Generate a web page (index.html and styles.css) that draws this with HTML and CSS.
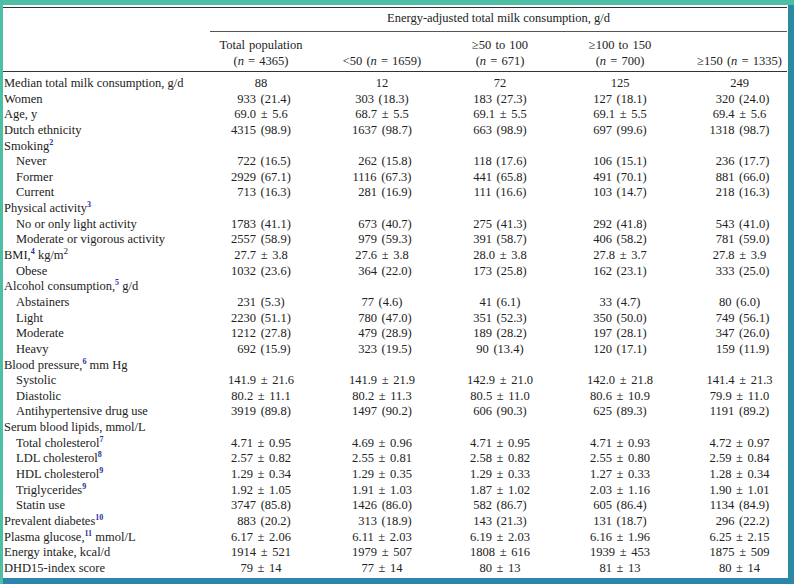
FILE: index.html
```html
<!DOCTYPE html>
<html>
<head>
<meta charset="utf-8">
<link rel="stylesheet" href="styles.css">
</head>
<body>
<div class="frame">
<table class="tbl">
<colgroup>
<col class="c-label"><col class="c1"><col class="c2"><col class="c3"><col class="c4"><col class="c5">
</colgroup>
<thead>
<tr class="span-row"><th></th><th colspan="5" class="spanner">Energy-adjusted total milk consumption, g/d</th></tr>
<tr class="head-row">
<th></th>
<th>Total population<br>(<i>n</i> = 4365)</th>
<th>&lt;50 (<i>n</i> = 1659)</th>
<th>≥50 to 100<br>(<i>n</i> = 671)</th>
<th>≥100 to 150<br>(<i>n</i> = 700)</th>
<th>≥150 (<i>n</i> = 1335)</th>
</tr>
</thead>
<tbody>
<tr class="first"><td>Median total milk consumption, g/d</td><td>88</td><td>12</td><td>72</td><td>125</td><td>249</td></tr>
<tr><td>Women</td><td class="pd">933 (21.4)</td><td>303 (18.3)</td><td>183 (27.3)</td><td>127 (18.1)</td><td class="pd">320 (24.0)</td></tr>
<tr><td>Age, y</td><td>69.0 ± 5.6</td><td>68.7 ± 5.5</td><td>69.1 ± 5.5</td><td>69.1 ± 5.5</td><td>69.4 ± 5.6</td></tr>
<tr><td>Dutch ethnicity</td><td>4315 (98.9)</td><td>1637 (98.7)</td><td>663 (98.9)</td><td>697 (99.6)</td><td>1318 (98.7)</td></tr>
<tr><td>Smoking<sup class="fn">2</sup></td><td></td><td></td><td></td><td></td><td></td></tr>
<tr><td class="ind">Never</td><td class="pd">722 (16.5)</td><td class="pd">262 (15.8)</td><td>118 (17.6)</td><td>106 (15.1)</td><td class="pd">236 (17.7)</td></tr>
<tr><td class="ind">Former</td><td>2929 (67.1)</td><td>1116 (67.3)</td><td>441 (65.8)</td><td>491 (70.1)</td><td class="pd">881 (66.0)</td></tr>
<tr><td class="ind">Current</td><td class="pd">713 (16.3)</td><td class="pd">281 (16.9)</td><td>111 (16.6)</td><td>103 (14.7)</td><td class="pd">218 (16.3)</td></tr>
<tr><td>Physical activity<sup class="fn">3</sup></td><td></td><td></td><td></td><td></td><td></td></tr>
<tr><td class="ind">No or only light activity</td><td>1783 (41.1)</td><td class="pd">673 (40.7)</td><td>275 (41.3)</td><td>292 (41.8)</td><td class="pd">543 (41.0)</td></tr>
<tr><td class="ind">Moderate or vigorous activity</td><td>2557 (58.9)</td><td class="pd">979 (59.3)</td><td>391 (58.7)</td><td>406 (58.2)</td><td class="pd">781 (59.0)</td></tr>
<tr><td>BMI,<sup class="fn">4</sup> kg/m<sup class="pw">2</sup></td><td>27.7 ± 3.8</td><td>27.6 ± 3.8</td><td>28.0 ± 3.8</td><td>27.8 ± 3.7</td><td>27.8 ± 3.9</td></tr>
<tr><td class="ind">Obese</td><td>1032 (23.6)</td><td class="pd">364 (22.0)</td><td>173 (25.8)</td><td>162 (23.1)</td><td class="pd">333 (25.0)</td></tr>
<tr><td>Alcohol consumption,<sup class="fn">5</sup> g/d</td><td></td><td></td><td></td><td></td><td></td></tr>
<tr><td class="ind">Abstainers</td><td>231 (5.3)</td><td>77 (4.6)</td><td>41 (6.1)</td><td>33 (4.7)</td><td>80 (6.0)</td></tr>
<tr><td class="ind">Light</td><td>2230 (51.1)</td><td class="pd">780 (47.0)</td><td>351 (52.3)</td><td>350 (50.0)</td><td class="pd">749 (56.1)</td></tr>
<tr><td class="ind">Moderate</td><td>1212 (27.8)</td><td class="pd">479 (28.9)</td><td>189 (28.2)</td><td>197 (28.1)</td><td class="pd">347 (26.0)</td></tr>
<tr><td class="ind">Heavy</td><td class="pd">692 (15.9)</td><td class="pd">323 (19.5)</td><td>90 (13.4)</td><td>120 (17.1)</td><td class="pd">159 (11.9)</td></tr>
<tr><td>Blood pressure,<sup class="fn">6</sup> mm Hg</td><td></td><td></td><td></td><td></td><td></td></tr>
<tr><td class="ind">Systolic</td><td>141.9 ± 21.6</td><td>141.9 ± 21.9</td><td>142.9 ± 21.0</td><td>142.0 ± 21.8</td><td>141.4 ± 21.3</td></tr>
<tr><td class="ind">Diastolic</td><td>80.2 ± 11.1</td><td>80.2 ± 11.3</td><td>80.5 ± 11.0</td><td>80.6 ± 10.9</td><td>79.9 ± 11.0</td></tr>
<tr><td class="ind">Antihypertensive drug use</td><td>3919 (89.8)</td><td>1497 (90.2)</td><td>606 (90.3)</td><td>625 (89.3)</td><td>1191 (89.2)</td></tr>
<tr><td>Serum blood lipids, mmol/L</td><td></td><td></td><td></td><td></td><td></td></tr>
<tr><td class="ind">Total cholesterol<sup class="fn">7</sup></td><td>4.71 ± 0.95</td><td>4.69 ± 0.96</td><td>4.71 ± 0.95</td><td>4.71 ± 0.93</td><td>4.72 ± 0.97</td></tr>
<tr><td class="ind">LDL cholesterol<sup class="fn">8</sup></td><td>2.57 ± 0.82</td><td>2.55 ± 0.81</td><td>2.58 ± 0.82</td><td>2.55 ± 0.80</td><td>2.59 ± 0.84</td></tr>
<tr><td class="ind">HDL cholesterol<sup class="fn">9</sup></td><td>1.29 ± 0.34</td><td>1.29 ± 0.35</td><td>1.29 ± 0.33</td><td>1.27 ± 0.33</td><td>1.28 ± 0.34</td></tr>
<tr><td class="ind">Triglycerides<sup class="fn">9</sup></td><td>1.92 ± 1.05</td><td>1.91 ± 1.03</td><td>1.87 ± 1.02</td><td>2.03 ± 1.16</td><td>1.90 ± 1.01</td></tr>
<tr><td class="ind">Statin use</td><td>3747 (85.8)</td><td>1426 (86.0)</td><td>582 (86.7)</td><td>605 (86.4)</td><td>1134 (84.9)</td></tr>
<tr><td>Prevalent diabetes<sup class="fn">10</sup></td><td class="pd">883 (20.2)</td><td class="pd">313 (18.9)</td><td>143 (21.3)</td><td>131 (18.7)</td><td class="pd">296 (22.2)</td></tr>
<tr><td>Plasma glucose,<sup class="fn">11</sup> mmol/L</td><td>6.17 ± 2.06</td><td>6.11 ± 2.03</td><td>6.19 ± 2.03</td><td>6.16 ± 1.96</td><td>6.25 ± 2.15</td></tr>
<tr><td>Energy intake, kcal/d</td><td>1914 ± 521</td><td>1979 ± 507</td><td>1808 ± 616</td><td>1939 ± 453</td><td>1875 ± 509</td></tr>
<tr><td>DHD15-index score</td><td>79 ± 14</td><td>77 ± 14</td><td>80 ± 13</td><td>81 ± 13</td><td>80 ± 14</td></tr>
</tbody>
</table>
</div>
</body>
</html>
```

FILE: styles.css
```css
html, body {
  margin: 0;
  padding: 0;
}
body {
  background: #4dbfa5;
  width: 794px;
  height: 584px;
  overflow: hidden;
  padding-top: 5px;
  padding-left: 3px;
  box-sizing: border-box;
}
.frame {
  width: 791px;
  height: 579px;
  box-sizing: border-box;
  background: #ffffff;
  border-right: 6px solid #2a8aa2;
  border-bottom: 6px solid #2c85aa;
  padding-top: 2px;
  overflow: hidden;
}
.tbl {
  width: 784px;
  table-layout: fixed;
  border-collapse: collapse;
  border-spacing: 0;
  font-family: "Liberation Serif", "Times New Roman", serif;
  font-size: 12.5px;
  color: #222222;
  border-top: 1px solid #333333;
}
.c-label { width: 207px; }
.c1 { width: 102px; }
.c2 { width: 140px; }
.c3 { width: 96px; }
.c4 { width: 144px; }
.c5 { width: 95px; }
th {
  font-weight: normal;
  text-align: center;
  padding: 0;
  word-spacing: 1px;
}
.span-row th {
  padding: 3px 0 4px;
  line-height: 15.68px;
  word-spacing: 0;
}
.spanner {
  border-bottom: 1px solid #555555;
}
.head-row th {
  vertical-align: bottom;
  line-height: 16.4px;
  padding: 5px 0 1px;
  border-bottom: 1px solid #333333;
}
td {
  padding: 0;
  line-height: 15.64px;
  text-align: center;
  white-space: nowrap;
  word-spacing: 1.5px;
}
td:first-child {
  text-align: left;
  padding-left: 1px;
  word-spacing: 0;
}
td.ind {
  padding-left: 13px;
}
td.pd {
  padding-left: 6px;
}
tr.first td {
  padding-top: 4.5px;
}
sup {
  line-height: 0;
  vertical-align: 0;
  position: relative;
}
sup.fn {
  font-size: 8px;
  color: #2b2f9e;
  top: -5px;
  font-weight: bold;
}
sup.pw {
  font-size: 9px;
  top: -5px;
}
```
